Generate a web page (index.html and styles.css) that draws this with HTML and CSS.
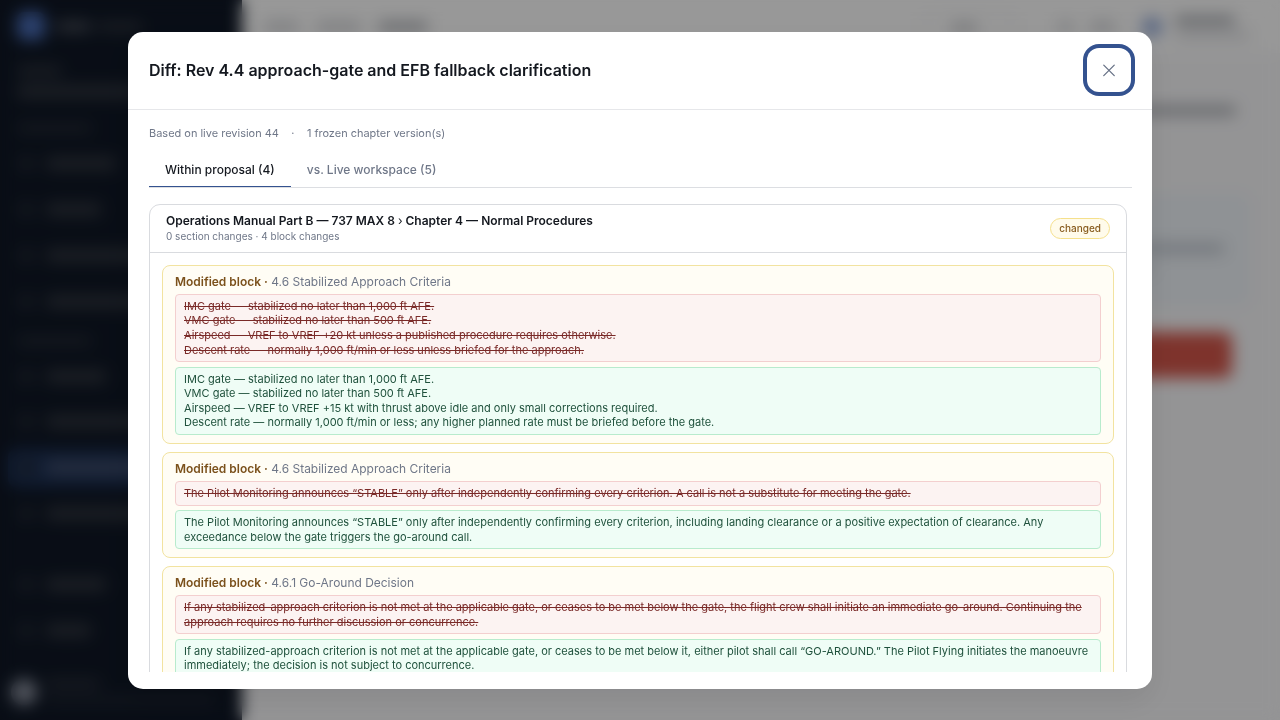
FILE: index.html
```html
<!DOCTYPE html>
<html lang="en">

<head>
  <meta charset="UTF-8">
  <meta name="viewport" content="width=device-width, initial-scale=1.0">
  <title>Proposal Diff</title>
  <link rel="stylesheet" href="styles.css">
</head>

<body>
  <!-- App behind the dialog -->
  <div class="app" aria-hidden="true">
    <aside class="sidebar">
      <div class="brand"><i class="brand-logo"></i><i class="bar w35 bright"></i><i class="bar w45"></i></div>
      <div class="org"><i class="bar w45"></i><i class="bar w120 tall"></i></div>
      <div class="nav-label"><i class="bar w75"></i></div>
      <div class="nav-item"><i class="dot"></i><i class="bar w70"></i></div>
      <div class="nav-item"><i class="dot"></i><i class="bar w55"></i></div>
      <div class="nav-item"><i class="dot"></i><i class="bar w120"></i></div>
      <div class="nav-item"><i class="dot"></i><i class="bar w120"></i></div>
      <div class="nav-label second"><i class="bar w75"></i></div>
      <div class="nav-item"><i class="dot"></i><i class="bar w60"></i></div>
      <div class="nav-item"><i class="dot"></i><i class="bar w120"></i></div>
      <div class="nav-item active"><i class="dot"></i><i class="bar w120"></i></div>
      <div class="nav-item"><i class="dot"></i><i class="bar w120"></i></div>
      <div class="nav-item foot"><i class="dot"></i><i class="bar w60"></i></div>
      <div class="nav-item"><i class="dot"></i><i class="bar w45"></i></div>
      <div class="user">
        <i class="avatar"></i>
        <div class="user-lines"><i class="bar w55"></i><i class="bar w170"></i></div>
      </div>
    </aside>
    <div class="main">
      <div class="topbar">
        <i class="ink w35"></i><i class="ink w45"></i><i class="ink w50 strong"></i>
        <i class="spacer"></i>
        <i class="search"></i><i class="ink w15"></i><i class="ink w25"></i>
        <i class="top-avatar"></i>
        <div class="top-user"><i class="ink w60 strong"></i><i class="ink w75 faint"></i></div>
      </div>
      <div class="content">
        <div class="content-line"><i class="ink w120 strong"></i></div>
        <div class="notice"><i class="ink w120"></i><i class="ink w50 faint"></i></div>
        <div class="danger"></div>
      </div>
    </div>
  </div>

  <div class="overlay">
    <div class="modal" role="dialog" aria-modal="true">
      <div class="modal-header">
        <h2>Diff: Rev 4.4 approach-gate and EFB fallback clarification</h2>
        <button class="close" aria-label="Close">
          <svg width="18" height="18" viewBox="0 0 24 24" fill="none" stroke="currentColor" stroke-width="1.7" stroke-linecap="round">
            <path d="M5 5.5l14 14M19 5.5L5 19.5" />
          </svg>
        </button>
      </div>

      <div class="modal-body">
        <div class="meta">
          <span>Based on live revision 44</span>
          <span>·</span>
          <span>1 frozen chapter version(s)</span>
        </div>

        <div class="tabs">
          <div class="tab selected">Within proposal (4)</div>
          <div class="tab">vs. Live workspace (5)</div>
        </div>

        <div class="card">
          <div class="card-header">
            <div>
              <div class="card-title">Operations Manual Part B — 737 MAX 8 <span>›</span> Chapter 4 — Normal Procedures</div>
              <div class="card-sub">0 section changes · 4 block changes</div>
            </div>
            <span class="badge">changed</span>
          </div>

          <div class="blocks">
            <div class="block">
              <div class="block-title"><b>Modified block ·</b> 4.6 Stabilized Approach Criteria</div>
              <div class="diff removed">IMC gate — stabilized no later than 1,000 ft AFE.<br>VMC gate — stabilized no later than 500 ft AFE.<br>Airspeed — VREF to VREF +20 kt unless a published procedure requires otherwise.<br>Descent rate — normally 1,000 ft/min or less unless briefed for the approach.</div>
              <div class="diff added">IMC gate — stabilized no later than 1,000 ft AFE.<br>VMC gate — stabilized no later than 500 ft AFE.<br>Airspeed — VREF to VREF +15 kt with thrust above idle and only small corrections required.<br>Descent rate — normally 1,000 ft/min or less; any higher planned rate must be briefed before the gate.</div>
            </div>

            <div class="block">
              <div class="block-title"><b>Modified block ·</b> 4.6 Stabilized Approach Criteria</div>
              <div class="diff removed">The Pilot Monitoring announces “STABLE” only after independently confirming every criterion. A call is not a substitute for meeting the gate.</div>
              <div class="diff added">The Pilot Monitoring announces “STABLE” only after independently confirming every criterion, including landing clearance or a positive expectation of clearance. Any exceedance below the gate triggers the go-around call.</div>
            </div>

            <div class="block">
              <div class="block-title"><b>Modified block ·</b> 4.6.1 Go-Around Decision</div>
              <div class="diff removed">If any stabilized-approach criterion is not met at the applicable gate, or ceases to be met below the gate, the flight crew shall initiate an immediate go-around. Continuing the approach requires no further discussion or concurrence.</div>
              <div class="diff added">If any stabilized-approach criterion is not met at the applicable gate, or ceases to be met below it, either pilot shall call “GO-AROUND.” The Pilot Flying initiates the manoeuvre immediately; the decision is not subject to concurrence.</div>
            </div>
          </div>
        </div>
      </div>
    </div>
  </div>
</body>

</html>
```
FILE: styles.css
```css
* {
  box-sizing: border-box;
}

body {
  margin: 0;
  height: 720px;
  overflow: hidden;
  font-family: Inter, "Liberation Sans", sans-serif;
  color: #14181f;
  background-color: #969697;
}

/* app behind the dialog */
.app {
  display: flex;
  height: 720px;
}

.sidebar {
  width: 242px;
  flex-shrink: 0;
  background-color: #0f1725;
}

.bar,
.ink,
.dot {
  display: block;
  flex-shrink: 0;
  height: 9px;
  border-radius: 4px;
}

.bar {
  background-color: #31363f;
}

.bar.bright {
  background-color: #50555f;
}

.bar.tall {
  height: 13px;
}

.w15 { width: 15px; }
.w25 { width: 25px; }
.w35 { width: 35px; }
.w45 { width: 45px; }
.w50 { width: 50px; }
.w55 { width: 55px; }
.w60 { width: 60px; }
.w70 { width: 70px; }
.w75 { width: 75px; }
.w120 { width: 120px; }
.w170 { width: 170px; }

.brand {
  display: flex;
  align-items: center;
  gap: 6px;
  height: 52px;
  padding-left: 17px;
}

.brand-logo {
  width: 28px;
  height: 28px;
  margin-right: 5px;
  border-radius: 7px;
  background-color: #4a6eb8;
}

.org {
  display: flex;
  flex-direction: column;
  gap: 10px;
  height: 63px;
  padding: 14px 0 0 17px;
}

.nav-label {
  display: flex;
  align-items: center;
  height: 26px;
  padding-left: 17px;
}

.nav-label .bar {
  height: 6px;
}

.nav-label.second {
  height: 29px;
  padding-top: 4px;
}

.nav-item {
  display: flex;
  align-items: center;
  gap: 12px;
  height: 45.8px;
  padding-left: 19px;
}

.nav-item .bar {
  height: 13px;
}

.dot {
  width: 15px;
  height: 13px;
  background-color: #252b36;
}

.nav-item.active {
  height: 38px;
  margin: 4px 8px;
  padding-left: 11px;
  border-radius: 8px;
  background-color: #1c3054;
}

.nav-item.active .bar {
  background-color: #414e6b;
}

.nav-item.foot {
  margin-top: 25px;
}

.user {
  display: flex;
  align-items: center;
  gap: 8px;
  margin-top: 26px;
  padding: 0 0 0 11px;
}

.avatar {
  width: 26px;
  height: 26px;
  border-radius: 50%;
  background-color: #8a909e;
}

.user-lines {
  display: flex;
  flex-direction: column;
  gap: 10px;
}

.user-lines .bar {
  height: 7px;
}

.user-lines .w170 {
  background-color: #232935;
}

.main {
  flex: 1;
  background-color: #f7f7f9;
}

.ink {
  background-color: #c9cbcf;
}

.ink.strong {
  background-color: #a2a5ab;
}

.ink.faint {
  background-color: #dfe0e4;
}

.topbar {
  display: flex;
  align-items: center;
  gap: 17px;
  height: 53px;
  padding: 0 30px 0 22px;
  background-color: #fdfdfd;
}

.spacer {
  flex: 1;
}

.search {
  width: 96px;
  height: 28px;
  margin-right: 24px;
  border: 2px solid #eeeef1;
  border-radius: 8px;
  background: linear-gradient(#b5b7bb, #b5b7bb) 28px 9px / 26px 7px no-repeat;
}

.top-avatar {
  width: 20px;
  height: 20px;
  margin-left: 10px;
  border-radius: 50%;
  background-color: #8fa6d6;
}

.top-user {
  display: flex;
  flex-direction: column;
  gap: 6px;
  margin-left: -4px;
  padding-top: 3px;
}

.content {
  padding: 50px 30px 0;
}

.content-line {
  display: flex;
  justify-content: flex-end;
  height: 91px;
  padding: 3px 14px 0 0;
}

.notice {
  display: flex;
  flex-direction: column;
  gap: 12px;
  height: 112px;
  padding: 50px 0 0 832px;
  border-radius: 8px;
  background-color: #eef3f8;
}

.notice .ink {
  background-color: #b9c0c9;
}

.notice .ink.faint {
  background-color: #d3dae2;
}

.danger {
  width: 160px;
  height: 46px;
  margin: 26px 18px 0 auto;
  border-radius: 8px;
  background-color: #d2564a;
}

.overlay {
  position: fixed;
  inset: 0;
  display: flex;
  align-items: center;
  justify-content: center;
  background-color: rgba(0, 0, 0, 0.4);
  backdrop-filter: blur(8px);
}

/* dialog */
.modal {
  display: flex;
  flex-direction: column;
  width: 1024px;
  height: 657px;
  padding-bottom: 17px;
  border-radius: 15px;
  background-color: #fff;
  box-shadow: 0 12px 30px rgba(0, 0, 0, 0.08);
}

.modal-header {
  display: flex;
  align-items: center;
  justify-content: space-between;
  height: 78px;
  flex-shrink: 0;
  padding: 0 21px;
  border-bottom: 1px solid #e6e7ea;
}

h2 {
  margin: 0;
  font-size: 16px;
  font-weight: 600;
}

.close {
  display: flex;
  align-items: center;
  justify-content: center;
  width: 44px;
  height: 44px;
  padding: 0;
  border: none;
  border-radius: 12px;
  background-color: #fff;
  color: #667085;
  box-shadow: 0 0 0 4px #34528f;
}

.modal-body {
  flex: 1;
  min-height: 0;
  overflow: hidden;
  padding: 15.5px 20px 0 21px;
}

.meta {
  display: flex;
  gap: 12.4px;
  font-size: 10.97px;
  line-height: 16px;
  color: #6f7788;
}

.tabs {
  display: flex;
  height: 47px;
  margin-bottom: 16px;
  padding-top: 12px;
  border-bottom: 1px solid #dcdee2;
}

.tab {
  height: 34px;
  padding: 0 16px;
  font-size: 12px;
  font-weight: 500;
  line-height: 34px;
  color: #6f7788;
}

.tab.selected {
  border-bottom: 1px solid #34528f;
  color: #14181f;
}

.card {
  margin-right: 5px;
  border: 1px solid #d9dbdf;
  border-radius: 11px;
}

.card-header {
  display: flex;
  align-items: center;
  justify-content: space-between;
  height: 48px;
  padding: 0 16px;
  border-bottom: 1px solid #d9dbdf;
}

.card-title {
  font-size: 12px;
  font-weight: 600;
  line-height: 17px;
}

.card-title span {
  font-weight: 400;
}

.card-sub {
  padding-bottom: 3px;
  font-size: 10px;
  line-height: 14px;
  color: #6f7788;
}

.badge {
  padding: 0 8px;
  border: 1px solid #f5e08c;
  border-radius: 11px;
  background-color: #fffbeb;
  font-size: 10px;
  font-weight: 500;
  line-height: 19px;
  color: #875a1c;
}

.blocks {
  display: flex;
  flex-direction: column;
  gap: 8.2px;
  padding: 12px;
}

.block {
  padding: 7px 12px 8px;
  border: 1px solid #f2e3a0;
  border-radius: 8px;
  background-color: #fffdf5;
}

.block-title {
  margin-bottom: 2.8px;
  font-size: 11.97px;
  line-height: 18px;
  color: #6f7788;
}

.block-title b {
  font-weight: 600;
  color: #7b511c;
}

.diff {
  padding: 4px 8px;
  border: 1px solid;
  border-radius: 4px;
  font-size: 11px;
  line-height: 14.6px;
}

.removed {
  margin-bottom: 4.4px;
  border-color: #f3cfcf;
  background-color: #fcf3f2;
  color: #7a2a28;
  text-decoration: line-through;
}

.added {
  border-color: #b8ebcd;
  background-color: #effdf6;
  color: #1f513c;
}
```
